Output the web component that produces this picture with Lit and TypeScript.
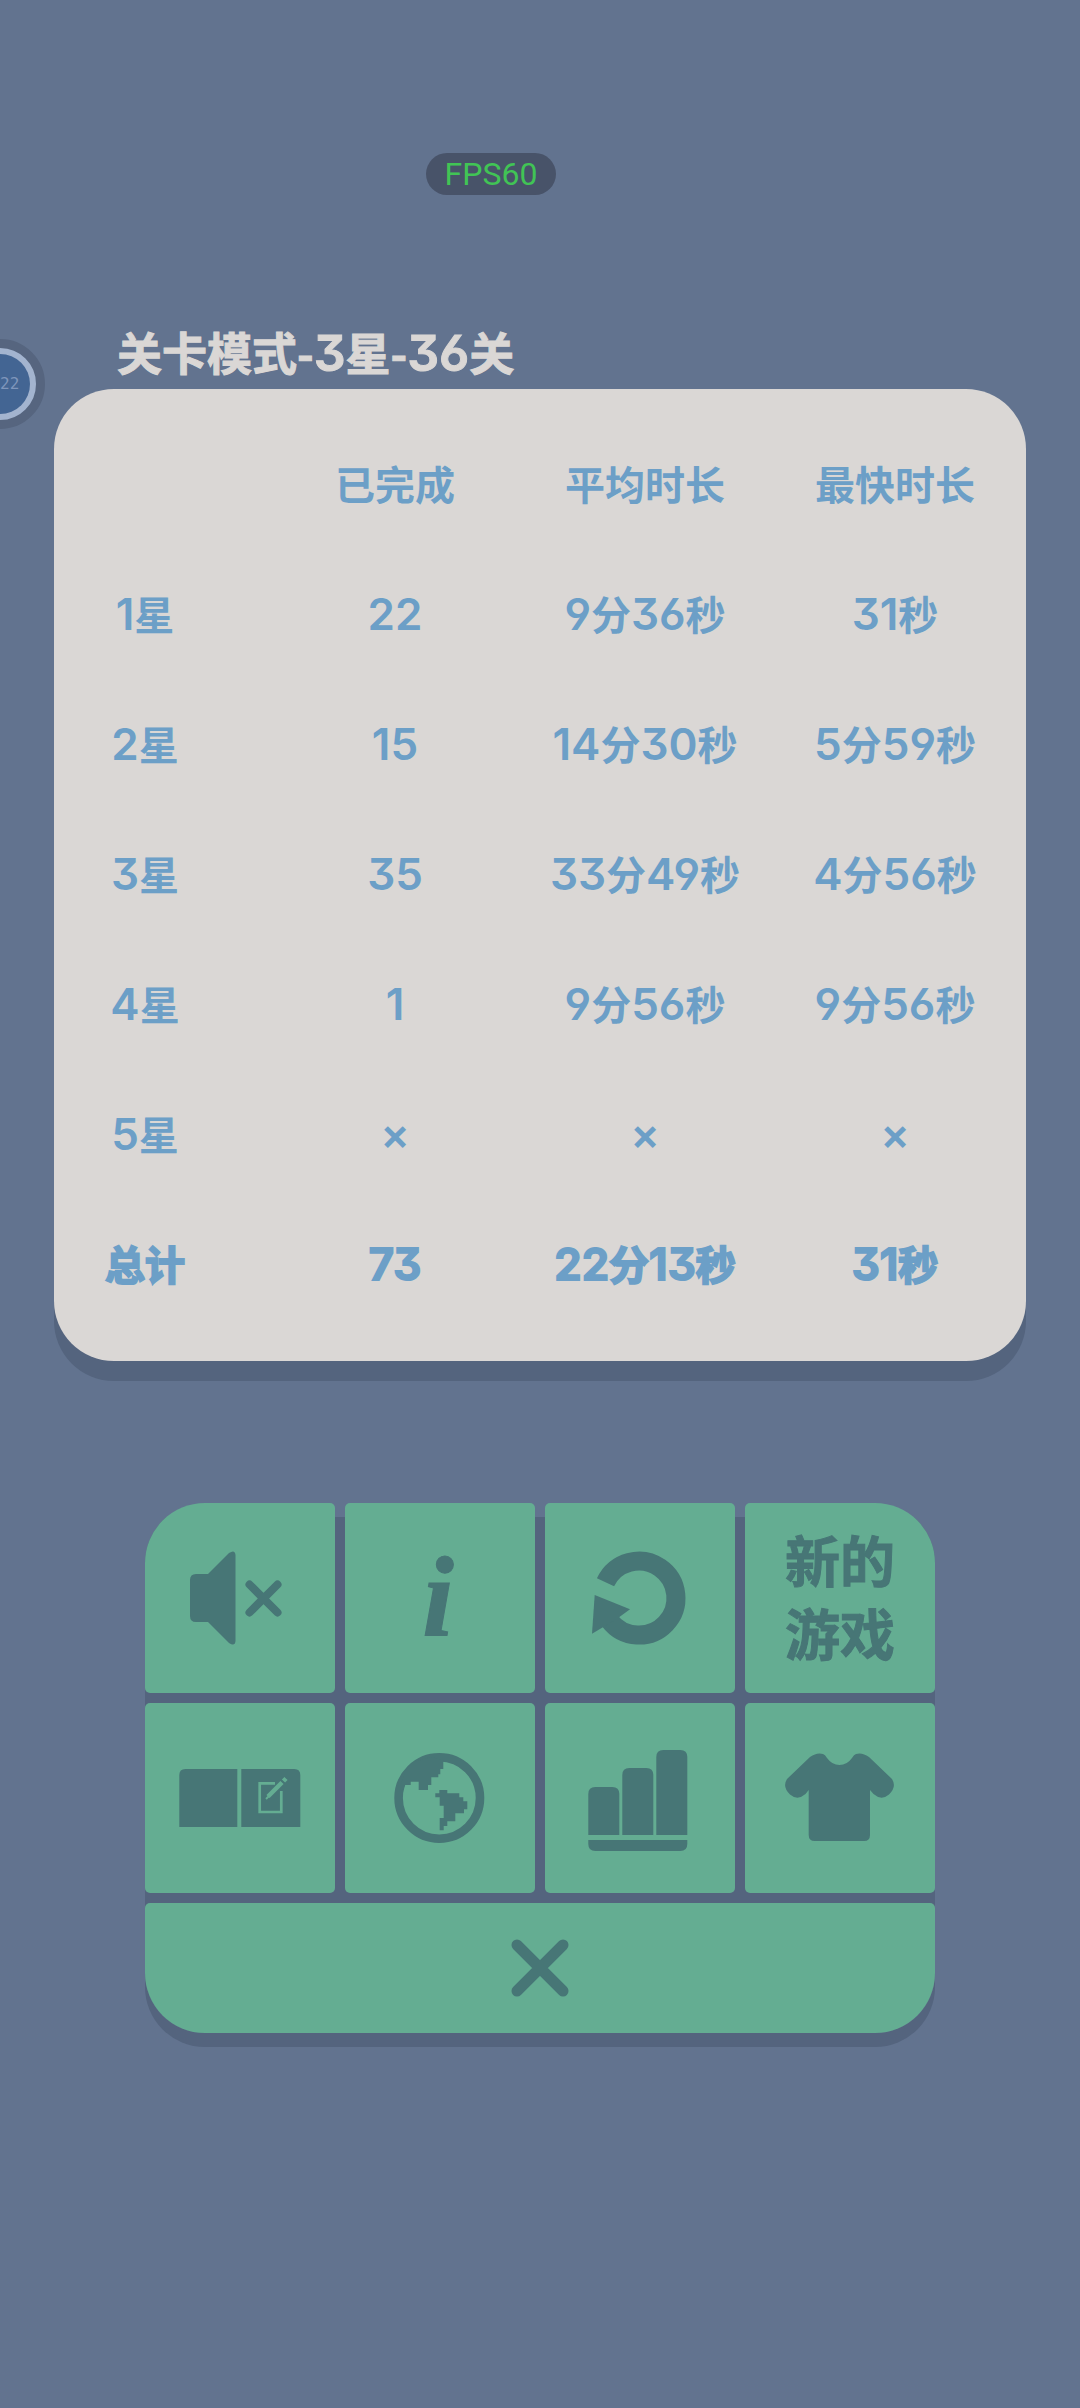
import { LitElement, html, css, svg } from "lit";
import { customElement, property, state } from "lit/decorators.js";

// digits and signs are set larger than the hanzi beside them
const mixed = (text: string) =>
  text.split(/([\d×]+)/).filter((p) => p).map((p) =>
    /^[\d×]/.test(p) ? html`<span class="num">${p}</span>` : p
  );

const icons: Record<string, any> = {
  mute: svg`
    <path d="M51 71H63L84 50Q90 46 90.500 52V138Q90 144 84 140L63 119H51Q45 119 45 113V77Q45 71 51 71Z"/>
    <path class="line" stroke-width="8" d="M104.500 81.500L132.500 109.500M132.500 81.500L104.500 109.500"/>`,
  restart: svg`
    <path fill="none" stroke="currentColor" stroke-width="19" d="M60.500 79.300A37 37 0 1 1 64.500 117.500"/>
    <path d="M49.700 92L85 106.300L73 115L58.300 124L47 130.700Z"/>`,
  rules: svg`
    <path d="M40.300 66H92.300V124H34.300V72Q34.300 66 40.300 66Z"/>
    <path d="M96.300 66H149.300Q155.300 66 155.300 72V124H96.300Z"/>
    <path class="cut" stroke-width="2.700" d="M130 80.400H114.700V109H136.300V88"/>
    <path class="cut" stroke-width="4.500" d="M123 93.500L137 79.500M138.500 78L141 75.500"/>
    <path class="cut" stroke-width="2" d="M121 96L124 93"/>`,
  globe: svg`
    <circle cx="94.300" cy="95" r="40.700" fill="none" stroke="currentColor" stroke-width="8.600"/>
    <path d="M98.300 57V66H95.300V71.300H93.300V74.300H86.300V82H83V87H73.700V78.700H65.700V82H60L58.300 87L55 84L60 70L72 58L86 54Z"/>
    <path d="M90.300 90.300H94.300V87H102.300V90.300H114.300V94.300H118.300V98.300H122.300V106.300H119V110.300H110.300V118.300H102.300V123H98.700V127.300H94.700V115H98.700V102.700H94.700V94.300H90.300Z"/>`,
  stats: svg`
    <path d="M43.300 132V91Q43.300 84 50.300 84H67.300Q74.300 84 74.300 91V132Z"/>
    <path d="M77.300 132V72Q77.300 65 84.300 65H101.300Q108.300 65 108.300 72V132Z"/>
    <path d="M111.300 132V54Q111.300 47 118.300 47H135.300Q142.300 47 142.300 54V132Z"/>
    <path d="M43.300 137H142.300V141Q142.300 148 135.300 148H50.300Q43.300 148 43.300 141Z"/>`,
  skin: svg`
    <path d="M63.700 87L60.500 91Q52.500 98 45 91.500Q37 84 42 76L65 54Q72 49 78 51Q80 51.700 82 55Q87 62 94.500 62Q102 62 107 55Q109 51.700 111 51Q117 49 124 54L147 76Q152 84 144 91.500Q136.500 98 128.500 91L125 87V132Q125 138 119 138H69.700Q63.700 138 63.700 132Z"/>`,
};

@customElement("stats-card")
export class StatsCardElement extends LitElement {
  static styles = css`
    :host {
      display: block;
      box-sizing: border-box;
      padding: 29px 6px 33px 0;
      border-radius: 60px;
      background: #dad7d5;
      box-shadow: 0 20px 0 #54647e;
      color: #6c9fc7;
    }
    table {
      width: 100%;
      table-layout: fixed;
      border-collapse: collapse;
    }
    .label {
      width: 182px;
      padding-right: 34px;
    }
    th, td {
      height: 130px;
      padding: 0;
      text-align: center;
      vertical-align: middle;
      font-size: 40px;
      line-height: 60px;
      font-weight: bold;
      white-space: nowrap;
    }
    .num {
      font-family: Inter, sans-serif;
      font-feature-settings: "cv09", "cv03", "cv04";
      font-size: 44px;
      font-weight: 600;
    }
    .total th, .total td {
      -webkit-text-stroke: 2px currentColor;
    }
  `;

  @property({ attribute: false })
  heads: string[] = [];

  @property({ attribute: false })
  rows: string[][] = [];

  render() {
    return html`
      <table>
        <thead>
          <tr>
            ${this.heads.map((h, i) => i
              ? html`<th scope="col">${h}</th>`
              : html`<td class="label"></td>`)}
          </tr>
        </thead>
        <tbody>
          ${this.rows.map((row, r) => html`
            <tr class=${r === this.rows.length - 1 ? "total" : ""}>
              ${row.map((cell, i) => i
                ? html`<td>${mixed(cell)}</td>`
                : html`<th class="label" scope="row">${mixed(cell)}</th>`)}
            </tr>`)}
        </tbody>
      </table>`;
  }
}

@customElement("game-menu")
export class GameMenuElement extends LitElement {
  static styles = css`
    :host {
      display: grid;
      grid-template-columns: repeat(4, 1fr);
      gap: 10px;
      border-radius: 60px;
      background: linear-gradient(transparent 14px, #54647e 14px);
      box-shadow: 0 14px 0 #54647e;
    }
    button {
      display: flex;
      align-items: center;
      justify-content: center;
      aspect-ratio: 1;
      min-width: 0;
      margin: 0;
      padding: 0;
      border: 0;
      border-radius: 5px;
      background: #64ad92;
      color: #477676;
      font-family: inherit;
      cursor: pointer;
    }
    .first {
      border-top-left-radius: 60px;
    }
    .last {
      border-top-right-radius: 60px;
    }
    .close {
      grid-column: 1 / -1;
      aspect-ratio: auto;
      height: 130px;
      border-radius: 5px 5px 60px 60px;
    }
    svg {
      display: block;
      width: 100%;
      fill: currentColor;
    }
    .close svg {
      width: 58px;
    }
    .line {
      fill: none;
      stroke: currentColor;
      stroke-linecap: round;
    }
    .cut {
      fill: none;
      stroke: #64ad92;
    }
    .info {
      padding-right: 4px;
      font: italic bold 114px/120px "Liberation Serif", serif;
      -webkit-text-stroke: 1px currentColor;
    }
    .new {
      padding-bottom: 6px;
      font-size: 55px;
      line-height: 73px;
      font-weight: bold;
      -webkit-text-stroke: 1px currentColor;
    }
  `;

  @state()
  muted: boolean = true;

  icon(name: string) {
    return html`<svg viewBox="0 0 190 190" aria-hidden="true">${icons[name]}</svg>`;
  }

  toggleSound() {
    this.muted = !this.muted;
  }

  render() {
    return html`
      <button class="first" aria-label="声音" aria-pressed=${this.muted} @click=${this.toggleSound}>${this.icon("mute")}</button>
      <button aria-label="信息"><span class="info">i</span></button>
      <button aria-label="重新开始">${this.icon("restart")}</button>
      <button class="last"><span class="new">新的<br>游戏</span></button>
      <button aria-label="规则">${this.icon("rules")}</button>
      <button aria-label="语言">${this.icon("globe")}</button>
      <button aria-label="统计">${this.icon("stats")}</button>
      <button aria-label="皮肤">${this.icon("skin")}</button>
      <button class="close" aria-label="关闭" @click=${() => this.dispatchEvent(new Event("close"))}>
        <svg viewBox="0 0 58 58" aria-hidden="true"><path class="line" stroke-width="11" d="M6 6L52 52M52 6L6 52"/></svg>
      </button>`;
  }
}

@customElement("app-root")
export class AppRootElement extends LitElement {
  static styles = css`
    :host {
      display: block;
      position: relative;
      box-sizing: border-box;
      min-height: 100vh;
      overflow: hidden;
      padding: 316px 5% 60px;
      background: #62738f;
      font-family: "Noto Sans CJK SC", sans-serif;
    }
    h1 {
      margin: 0;
      padding-left: 63px;
      font-size: 45px;
      line-height: 72px;
      font-weight: bold;
      color: #dad7d5;
      white-space: nowrap;
      -webkit-text-stroke: 1px currentColor;
    }
    .num {
      font-family: Inter, sans-serif;
      font-feature-settings: "cv09", "cv03", "cv04";
      font-size: 50px;
      font-weight: 600;
    }
    game-menu {
      width: min(790px, 100%);
      margin: 142px auto 0;
    }
    /* both badges float over the game */
    .fps {
      position: absolute;
      top: 153px;
      left: 426px;
      width: 130px;
      border-radius: 21px;
      background: #485369;
      color: #41c455;
      font: 32px/42px Roboto, sans-serif;
      text-align: center;
    }
    .bubble {
      position: absolute;
      top: 339px;
      left: -45px;
      width: 90px;
      height: 90px;
      box-sizing: border-box;
      border: 9px solid #56657f;
      border-radius: 50%;
      background: #a3b4cf;
      display: grid;
    }
    .dial {
      margin: 6px;
      padding-left: 30px;
      border-radius: 50%;
      background: #436593;
      color: #7f96bb;
      font: 16px/60px "DejaVu Sans Mono", monospace;
    }
  `;

  @state()
  title: string = "关卡模式-3星-36关";

  @state()
  heads: string[] = ["", "已完成", "平均时长", "最快时长"];

  @state()
  rows: string[][] = [
    ["1星", "22", "9分36秒", "31秒"],
    ["2星", "15", "14分30秒", "5分59秒"],
    ["3星", "35", "33分49秒", "4分56秒"],
    ["4星", "1", "9分56秒", "9分56秒"],
    ["5星", "×", "×", "×"],
    ["总计", "73", "22分13秒", "31秒"],
  ];

  render() {
    return html`
      <div class="fps">FPS60</div>
      <div class="bubble"><span class="dial">22</span></div>
      <h1>${mixed(this.title)}</h1>
      <stats-card .heads=${this.heads} .rows=${this.rows}></stats-card>
      <game-menu></game-menu>`;
  }
}
